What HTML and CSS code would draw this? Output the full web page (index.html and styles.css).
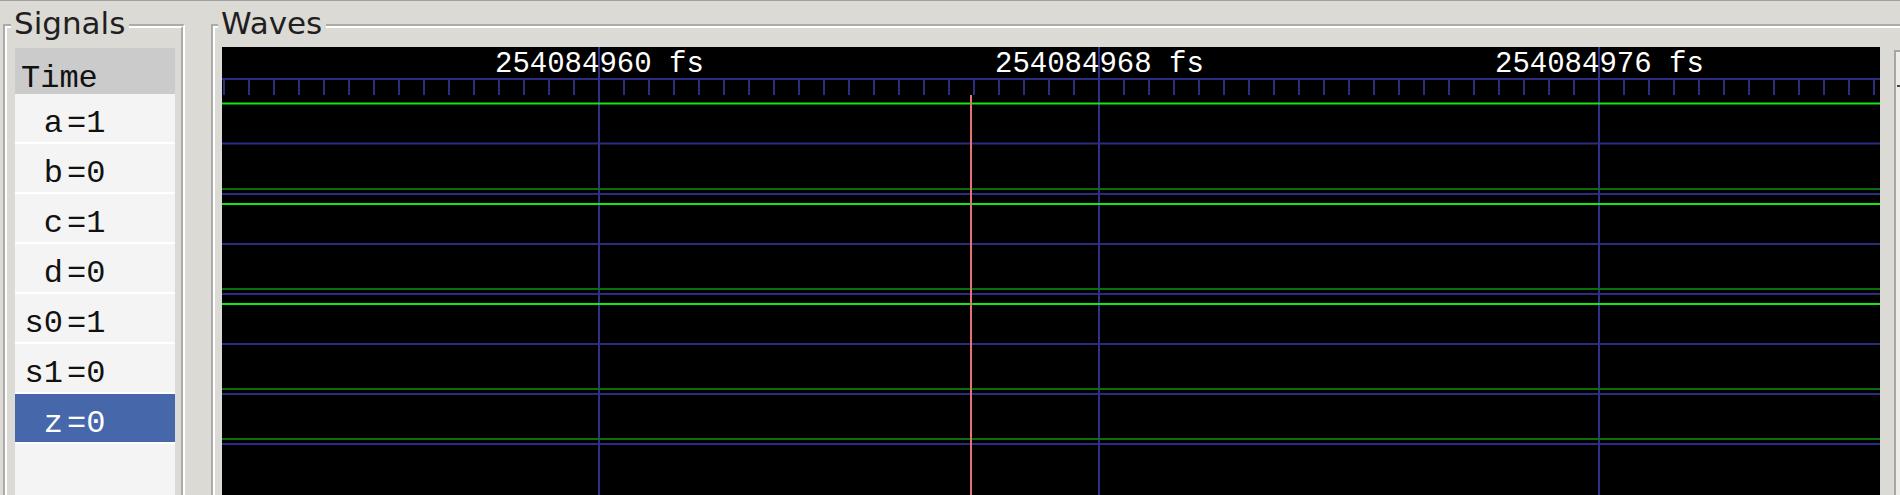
FILE: index.html
```html
<!DOCTYPE html>
<html>
<head>
<meta charset="utf-8">
<title>Waves</title>
<link rel="stylesheet" href="styles.css">
</head>
<body>
<div class="main">
  <fieldset class="frame signals">
    <legend>Signals</legend>
    <div class="list">
      <div class="row head">Time</div>
      <div class="row"><span class="name">a</span><span class="val">=1</span></div>
      <div class="row"><span class="name">b</span><span class="val">=0</span></div>
      <div class="row"><span class="name">c</span><span class="val">=1</span></div>
      <div class="row"><span class="name">d</span><span class="val">=0</span></div>
      <div class="row"><span class="name">s0</span><span class="val">=1</span></div>
      <div class="row"><span class="name">s1</span><span class="val">=0</span></div>
      <div class="row sel"><span class="name">z</span><span class="val">=0</span></div>
    </div>
  </fieldset>
  <fieldset class="frame waves">
    <legend>Waves</legend>
    <div class="wavebody">
      <svg class="canvas" width="1658" height="460" viewBox="0 0 1658 460" xmlns="http://www.w3.org/2000/svg">
        <defs>
          <pattern id="ticks" patternUnits="userSpaceOnUse" x="0" y="31" width="25" height="17">
            <rect class="grid" x="1" y="0" width="2" height="17"/>
          </pattern>
        </defs>
        <rect x="0" y="31" width="1658" height="17" fill="url(#ticks)"/>
        <rect class="grid" x="0" y="31" width="1658" height="2"/>
        <rect class="major" x="876" y="0" width="2" height="460"/>
        <rect class="major" x="376" y="0" width="2" height="460"/>
        <rect class="major" x="1376" y="0" width="2" height="460"/>
        <g class="grid">
          <rect x="0" y="95.5" width="1658" height="2"/>
          <rect x="0" y="146" width="1658" height="2"/>
          <rect x="0" y="196" width="1658" height="2"/>
          <rect x="0" y="246" width="1658" height="2"/>
          <rect x="0" y="296" width="1658" height="2"/>
          <rect x="0" y="346" width="1658" height="2"/>
          <rect x="0" y="396" width="1658" height="2"/>
        </g>
        <g class="low">
          <rect x="0" y="141" width="1658" height="2"/>
          <rect x="0" y="241" width="1658" height="2"/>
          <rect x="0" y="341" width="1658" height="2"/>
          <rect x="0" y="391" width="1658" height="2"/>
        </g>
        <g class="high">
          <rect x="0" y="55.5" width="1658" height="2"/>
          <rect x="0" y="156" width="1658" height="2"/>
          <rect x="0" y="256" width="1658" height="2"/>
        </g>
        <rect class="marker" x="748" y="48" width="2" height="412"/>
        <text class="tlabel" x="273" y="25">254084960 fs</text>
        <text class="tlabel" x="773" y="25">254084968 fs</text>
        <text class="tlabel" x="1273" y="25">254084976 fs</text>
      </svg>
      <div class="vscroll"><span class="tick"></span></div>
    </div>
  </fieldset>
</div>
</body>
</html>
```

FILE: styles.css
```css
html, body {
  margin: 0;
  height: 495px;
  overflow: hidden;
}

body {
  background: #dcdad5;
  border-top: 1px solid #a3a19d;
  box-sizing: border-box;
  font-family: "DejaVu Sans", sans-serif;
}

.main {
  display: flex;
  align-items: flex-start;
  gap: 26px;
  padding: 5px 0 0 3px;
  width: max-content;
}

.frame {
  margin: 0;
  border: 4px groove #ffffff;
  flex-shrink: 0;
  min-width: 0;
}

.frame legend {
  font: 31px/34px "DejaVu Sans", sans-serif;
  color: #1f1f1f;
  padding: 0 4px 6px 3px;
  margin-left: -4px;
}

.signals {
  padding: 2px 6px 0 8px;
}

.list {
  width: 160px;
  height: 460px;
  background: #f4f4f4;
  font: 32px/36px "Liberation Mono", monospace;
  color: #111111;
}

.row {
  height: 50px;
  box-sizing: border-box;
  border-bottom: 2px solid #ffffff;
  padding: 12px 0 0 8px;
  white-space: nowrap;
}

.row.head {
  height: 46px;
  background: #cbcbcb;
  border-bottom: none;
  padding: 12.5px 0 0 6px;
}

.row.sel {
  background: #4767ab;
  color: #ffffff;
}

.name {
  display: inline-block;
  width: 40px;
  text-align: right;
}

.val {
  margin-left: 4px;
}

.waves {
  padding: 1px 0 0 7px;
}

.wavebody {
  display: flex;
  align-items: flex-start;
  gap: 14px;
}

.canvas {
  display: block;
  background: #000000;
}

.canvas .grid,
.canvas .grid rect {
  fill: #2c2c82;
}

.canvas .major {
  fill: #30308a;
}

.canvas .low rect {
  fill: #0b700b;
}

.canvas .high rect {
  fill: #14e614;
}

.canvas .marker {
  fill: #e47474;
}

.canvas .tlabel {
  font: 29px "Liberation Mono", monospace;
  fill: #ffffff;
}

.vscroll {
  margin-top: 3px;
  width: 40px;
  height: 460px;
  box-sizing: border-box;
  border-left: 2px solid #a8a6a2;
  border-top: 2px solid #a8a6a2;
  background: #eeedea;
  padding-top: 33px;
}

.vscroll .tick {
  display: block;
  width: 8px;
  height: 2px;
  margin-left: 1px;
  background: #4a4a4a;
}
```
